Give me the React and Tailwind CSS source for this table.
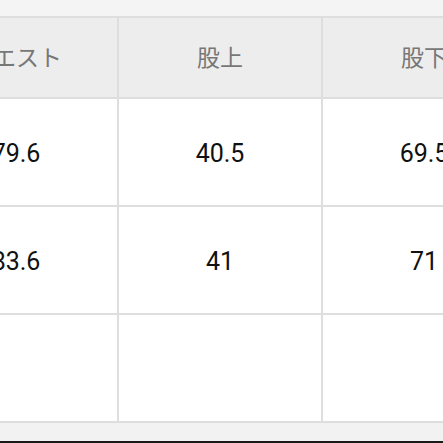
import React from "react";

const headers = ["ウエスト", "股上", "股下"];
const rows = [
  ["79.6", "40.5", "69.5"],
  ["83.6", "41", "71"],
  ["", "", ""],
];

export default function App() {
  return (
    <div className="w-[443px] h-[443px] overflow-hidden bg-[#f5f4f4] flex flex-col" style={{ fontFamily: '"Noto Sans CJK JP", "Noto Sans", sans-serif' }}>
      <div className="h-[16px] shrink-0" />
      {/* size table, cropped on the left */}
      <div className="ml-[-85px] w-[612px] grid grid-cols-[202px_202px_202px] grid-rows-[79px_106px_106px_106px] gap-[2px] py-[2px] pr-[2px] bg-[#dedede]">
        {headers.map((h) => (
          <div key={h} className="bg-[#eeeded] flex items-center justify-center text-[23px] text-[#777] pb-[2px]">
            {h}
          </div>
        ))}
        {rows.map((r, i) =>
          r.map((v, j) => (
            <div
              key={i + "-" + j}
              className="bg-white flex items-center justify-center text-[25px] text-[#111] pt-[3px]"
              style={{ fontFamily: 'Roboto, "Noto Sans", sans-serif' }}
            >
              {v}
            </div>
          ))
        )}
      </div>
      <div className="flex-1 bg-[#f3f2f2]" />
      <div className="h-[2px] bg-[#1a1a1a] shrink-0" />
    </div>
  );
}
